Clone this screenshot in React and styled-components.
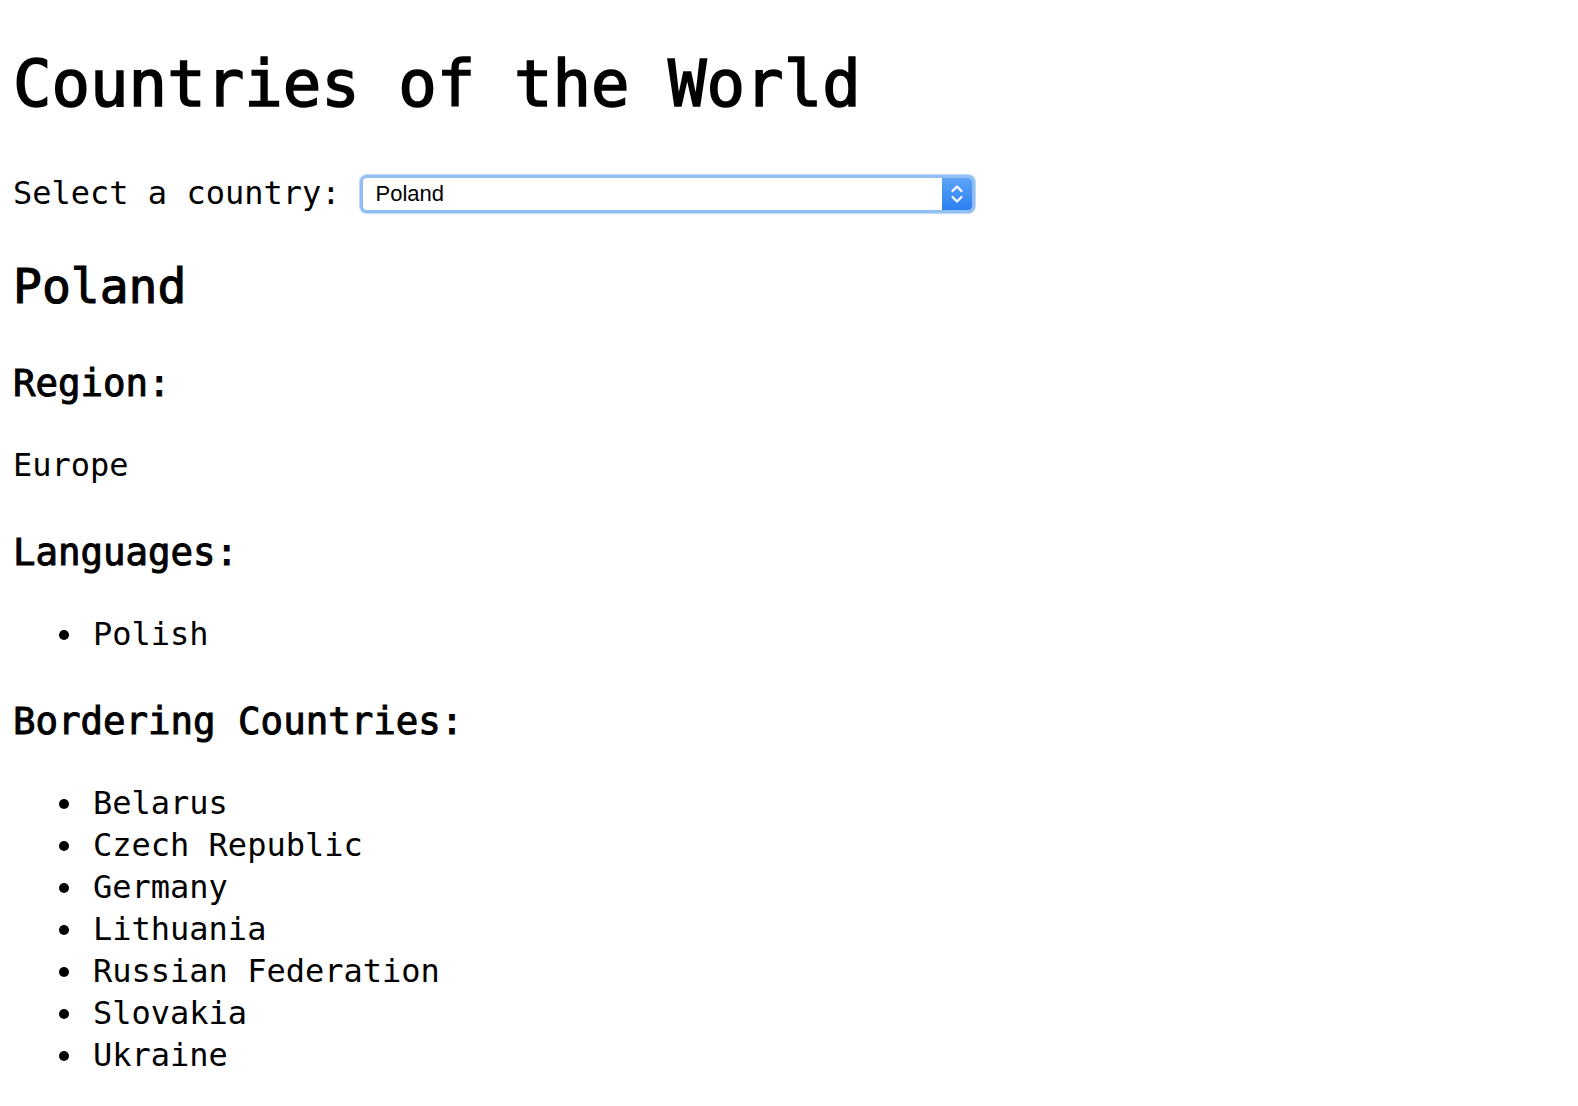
import React, { useState } from "react";
import styled, { createGlobalStyle } from "styled-components";

const GlobalStyle = createGlobalStyle`
  html, body {
    margin: 0;
    background: #fff;
  }
  body {
    padding: 16px 13px;
    font-family: "DejaVu Sans Mono", monospace;
    font-size: 32px;
    line-height: 42px;
    color: #000;
  }
`;

const countries = {
  Poland: {
    region: "Europe",
    languages: ["Polish"],
    borders: [
      "Belarus",
      "Czech Republic",
      "Germany",
      "Lithuania",
      "Russian Federation",
      "Slovakia",
      "Ukraine",
    ],
  },
};

const Title = styled.h1`
  font-size: 64px;
  line-height: 83px;
  font-weight: normal;
  -webkit-text-stroke: 1.6px #000;
  margin: 27px 0 43px;
`;

const PickerRow = styled.div`
  display: flex;
  align-items: center;
  gap: 19px;
  height: 47px;
`;

const Label = styled.label`
  font-size: 32px;
`;

const SelectBox = styled.div`
  display: flex;
  align-items: stretch;
  width: 615px;
  height: 38px;
  margin-top: 2px;
  box-sizing: border-box;
  border: 3px solid #93bef2;
  border-radius: 7px;
  background: #fff;
  overflow: hidden;
  box-shadow: 0 0 0 1px #bcd7f8;
`;

const NativeSelect = styled.select`
  flex: 1;
  appearance: none;
  border: none;
  outline: none;
  background: transparent;
  font-family: "Liberation Sans", Arial, sans-serif;
  font-size: 22px;
  color: #000;
  padding: 0 0 0 13px;
  margin: 0;
`;

const Stepper = styled.div`
  width: 30px;
  display: flex;
  align-items: center;
  justify-content: center;
  background: linear-gradient(#5da4f7, #2a7ff2);
`;

const CountryName = styled.h2`
  font-size: 48px;
  line-height: 62px;
  font-weight: normal;
  -webkit-text-stroke: 1.1px #000;
  margin: 39px 0 42px;
`;

const SectionTitle = styled.h3`
  font-size: 37.4px;
  line-height: 49px;
  font-weight: normal;
  -webkit-text-stroke: 1px #000;
  margin: 42px 0 36px;
`;

const Text = styled.p`
  margin: 0 0 37px;
`;

const List = styled.ul`
  margin: 0 0 37px;
  padding-left: 80px;
  list-style: none;
`;

const Item = styled.li`
  &::before {
    content: "";
    display: inline-block;
    width: 10px;
    height: 10px;
    border-radius: 50%;
    background: #000;
    margin-left: -34px;
    margin-right: 24px;
    vertical-align: 5px;
  }
`;

function Chevrons() {
  return (
    <svg width="14" height="24" viewBox="0 0 14 24" fill="none">
      <path d="M2.5 9 L7 4.5 L11.5 9" stroke="#fff" strokeWidth="2.2" strokeLinecap="round" strokeLinejoin="round" />
      <path d="M2.5 15 L7 19.5 L11.5 15" stroke="#fff" strokeWidth="2.2" strokeLinecap="round" strokeLinejoin="round" />
    </svg>
  );
}

export default function App() {
  const [selected, setSelected] = useState("Poland");
  const country = countries[selected];

  return (
    <>
      <GlobalStyle />
      <Title>Countries of the World</Title>
      <PickerRow>
        <Label htmlFor="country">Select a country:</Label>
        <SelectBox>
          <NativeSelect
            id="country"
            value={selected}
            onChange={(e) => setSelected(e.target.value)}
          >
            {Object.keys(countries).map((name) => (
              <option key={name} value={name}>
                {name}
              </option>
            ))}
          </NativeSelect>
          <Stepper>
            <Chevrons />
          </Stepper>
        </SelectBox>
      </PickerRow>
      <CountryName>{selected}</CountryName>
      <SectionTitle>Region:</SectionTitle>
      <Text>{country.region}</Text>
      <SectionTitle>Languages:</SectionTitle>
      <List>
        {country.languages.map((l) => (
          <Item key={l}>{l}</Item>
        ))}
      </List>
      <SectionTitle>Bordering Countries:</SectionTitle>
      <List>
        {country.borders.map((b) => (
          <Item key={b}>{b}</Item>
        ))}
      </List>
    </>
  );
}
